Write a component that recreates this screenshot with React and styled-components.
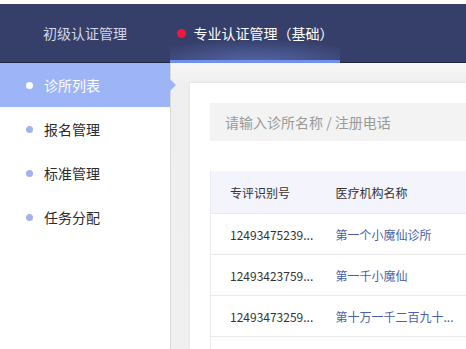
import styled, { createGlobalStyle } from "styled-components";

const GlobalStyle = createGlobalStyle`
  html, body {
    margin: 0;
    padding: 0;
    background: #ffffff;
    font-family: "Noto Sans CJK SC", "Noto Sans", sans-serif;
  }
`;

const tabs = [
  { label: "初级认证管理", active: false },
  { label: "专业认证管理（基础）", active: true },
];

const menu = ["诊所列表", "报名管理", "标准管理", "任务分配"];

const rows = [
  { id: "12493475239...", name: "第一个小魔仙诊所" },
  { id: "12493423759...", name: "第一千小魔仙" },
  { id: "12493473259...", name: "第十万一千二百九十..." },
];

function App() {
  return (
    <Page>
      <GlobalStyle />
      <Header>
        {tabs.map((tab) => (
          <Tab key={tab.label} $active={tab.active}>
            {tab.active && <RedDot />}
            {tab.label}
          </Tab>
        ))}
      </Header>
      <Body>
        <Sidebar>
          {menu.map((item, i) => (
            <MenuItem key={item} $active={i === 0}>
              <MenuDot $active={i === 0} />
              {item}
            </MenuItem>
          ))}
        </Sidebar>
        <Main>
          <Card>
            <SearchBox placeholder="请输入诊所名称 / 注册电话" />
            <Table>
              <colgroup>
                <col style={{ width: 106 }} />
                <col />
              </colgroup>
              <thead>
                <tr>
                  <HeadCell>专评识别号</HeadCell>
                  <HeadCell>医疗机构名称</HeadCell>
                </tr>
              </thead>
              <tbody>
                {rows.map((row) => (
                  <tr key={row.id}>
                    <Cell>{row.id}</Cell>
                    <Cell $link>{row.name}</Cell>
                  </tr>
                ))}
                <tr>
                  <Cell />
                  <Cell />
                </tr>
              </tbody>
            </Table>
          </Card>
        </Main>
      </Body>
    </Page>
  );
}

const Page = styled.div`
  height: 100vh;
  display: flex;
  flex-direction: column;
  overflow: hidden;
  border-top: 4px solid #ffffff;
  box-sizing: border-box;
`;

const Header = styled.header`
  height: 59px;
  flex-shrink: 0;
  display: flex;
  background: #363f6a;
  border-bottom: 1px solid #1e2442;
  box-sizing: border-box;
`;

const Tab = styled.div`
  position: relative;
  width: 170px;
  display: flex;
  align-items: center;
  justify-content: center;
  gap: 8px;
  font-size: 14px;
  color: ${(p) => (p.$active ? "#ffffff" : "#d2d6e6")};
  background: ${(p) =>
    p.$active
      ? "radial-gradient(ellipse 70% 40% at 50% 100%, rgba(120,150,240,0.45), rgba(54,63,106,0))"
      : "transparent"};

  &::after {
    content: "";
    display: ${(p) => (p.$active ? "block" : "none")};
    position: absolute;
    left: 0;
    right: 0;
    bottom: -1px;
    height: 3px;
    background: #7090f0;
  }
`;

const RedDot = styled.span`
  width: 9px;
  height: 9px;
  border-radius: 50%;
  background: #ec1b3b;
`;

const Body = styled.div`
  flex: 1;
  display: flex;
  min-height: 0;
`;

const Sidebar = styled.nav`
  width: 170px;
  flex-shrink: 0;
  background: #ffffff;
`;

const MenuItem = styled.div`
  position: relative;
  height: 44px;
  display: flex;
  align-items: center;
  gap: 11px;
  padding-left: 26px;
  font-size: 14px;
  color: ${(p) => (p.$active ? "#ffffff" : "#2b2b2b")};
  background: ${(p) => (p.$active ? "#9db4f7" : "transparent")};

  &::after {
    content: "";
    display: ${(p) => (p.$active ? "block" : "none")};
    position: absolute;
    right: -6px;
    top: 16px;
    border-left: 6px solid #9db4f7;
    border-top: 6px solid transparent;
    border-bottom: 6px solid transparent;
    z-index: 2;
  }
`;

const MenuDot = styled.span`
  width: 7px;
  height: 7px;
  border-radius: 50%;
  background: ${(p) => (p.$active ? "#ffffff" : "#a3b2ea")};
`;

const Main = styled.main`
  flex: 1;
  min-width: 0;
  overflow: hidden;
  background: linear-gradient(#f7f7f7, #efefef 20px, #f0f0f0);
  border-left: 1px solid #d9d9d9;
  padding: 20px 0 0 19px;
`;

const Card = styled.section`
  width: 600px;
  height: 100%;
  background: #ffffff;
  box-shadow: 0 0 3px rgba(0, 0, 0, 0.08);
  padding: 20px;
  box-sizing: border-box;
`;

const SearchBox = styled.input`
  display: block;
  width: 100%;
  height: 38px;
  border: none;
  outline: none;
  background: #f3f3f3;
  padding: 0 15px;
  box-sizing: border-box;
  font-family: inherit;
  font-size: 14px;
  color: #333333;

  &::placeholder {
    color: #9a9a9a;
  }
`;

const Table = styled.table`
  margin-top: 30px;
  width: 100%;
  border-collapse: collapse;
  table-layout: fixed;
  border-left: 1px solid #ebebeb;
`;

const HeadCell = styled.th`
  height: 42px;
  padding: 0 0 0 19px;
  text-align: left;
  font-weight: normal;
  font-size: 12px;
  color: #333333;
  background: #f3f4fc;
  border-bottom: 1px solid #ebebeb;
  white-space: nowrap;
`;

const Cell = styled.td`
  height: 40px;
  padding: 0 0 0 19px;
  font-size: 12px;
  color: ${(p) => (p.$link ? "#4a5fa6" : "#333333")};
  border-bottom: 1px solid #ebebeb;
  white-space: nowrap;
`;

export default App;
